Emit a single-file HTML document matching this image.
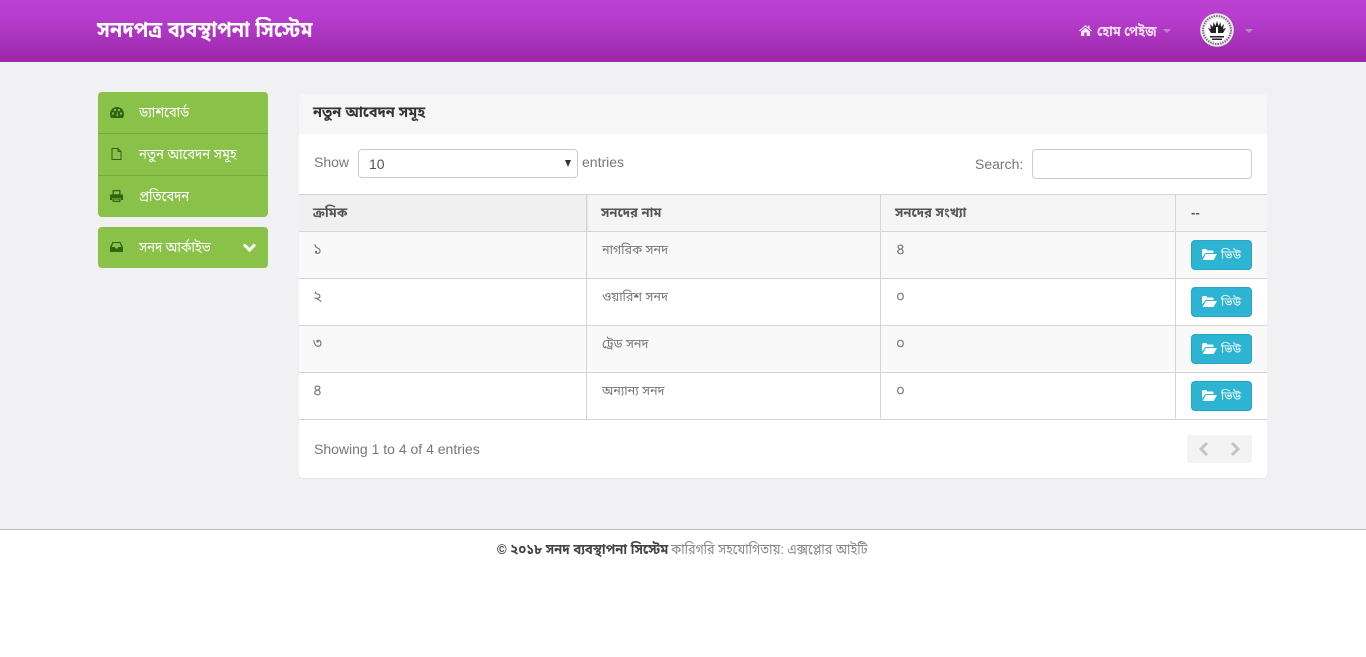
<!DOCTYPE html>
<html lang="bn"><head><meta charset="utf-8"><title>সনদপত্র ব্যবস্থাপনা সিস্টেম</title>
<style>
*{box-sizing:border-box}
html,body{margin:0;padding:0;width:1366px;height:657px;overflow:hidden;background:#fff;font-family:"Liberation Sans","Noto Sans Bengali","Lohit Bengali","FreeSans",sans-serif;color:#777;font-size:14px}
.a{position:absolute;white-space:nowrap}
.sx{transform-origin:0 50%}
#hdr{left:0;top:0;width:1366px;height:62px;background:linear-gradient(#bb40d2,#b63dcd 30%,#9c27a9)}
#bg{left:0;top:62px;width:1366px;height:468px;background:#f1f0f2;border-bottom:1px solid #bbb}
.side{left:98px;width:170px;background:#8ac249;border-radius:4px}
.sr{left:98px;width:170px;height:1px;background:#76a93f}
.st{left:139px;color:#fff;font-size:14px;line-height:20px;transform-origin:0 50%;transform:scaleX(.93)}
#panel{left:299px;top:94px;width:968px;height:384px;background:#fff;border-radius:4px;box-shadow:0 1px 1px rgba(0,0,0,.04)}
#ph{left:299px;top:94px;width:968px;height:40px;background:#f6f6f6;border-radius:4px 4px 0 0}
.h{background:#d5d5d5}
.td{color:#777;font-size:13px;line-height:18px;transform-origin:0 50%;transform:scaleX(.97)}
.dg{color:#777;font-size:15px;line-height:18px}
.th{color:#555;font-size:13px;font-weight:bold;line-height:18px}
.btn{left:1191px;width:61px;height:30px;background:#2cb4d2;border:1px solid #28a5c2;border-radius:4px;color:#fff;font-size:12px;line-height:28px;padding-left:29px}
</style></head><body>
<div class="a" id="bg"></div>
<div class="a" id="hdr"></div>
<div class="a sx" style="left:97px;top:15px;color:#fff;font-size:22px;font-weight:bold;line-height:30px;transform:scaleX(.907)">সনদপত্র ব্যবস্থাপনা সিস্টেম</div>

<svg class="a" style="left:1079px;top:25px" width="13" height="11" viewBox="0 0 13 11"><path d="M6.500 0 0 5.600l.8.8L6.500 1.600l5.700 4.800.8-.8-2.500-2.100V.6H9v1.500zM2 6.500V11h3.300V7.500h2.400V11H11V6.500L6.500 2.700z" fill="#f5e6f8"/></svg>
<div class="a sx" style="left:1097px;top:21px;color:#f3dff6;font-size:14px;font-weight:bold;line-height:20px;transform:scaleX(.91)">হোম পেইজ</div>
<div class="a" style="left:1163px;top:29px;border:4px solid transparent;border-top-color:#b98ac2;border-bottom:0"></div>
<svg class="a" style="left:1200px;top:13px" width="34" height="34" viewBox="0 0 34 34"><circle cx="17" cy="17" r="16.800" fill="#eeeaee"/><circle cx="17" cy="17" r="14" fill="none" stroke="#777" stroke-width="2" stroke-dasharray="1.500 1"/><circle cx="17" cy="17" r="11.500" fill="#fff"/><path d="M17 8l1.500 5 2-4 .5 5 3-3-1 5 3-1-3 5H11l-3-5 3 1-1-5 3 3 .5-5 2 4z" fill="#222"/><path d="M10 23h14v1.500H10zM12 25.500h10V27H12z" fill="#222"/><path d="M16 14h2v7h-2z" fill="#fff"/></svg>
<div class="a" style="left:1245px;top:29px;border:4px solid transparent;border-top-color:#b98ac2;border-bottom:0"></div>

<div class="a side" style="top:92px;height:125px"></div>
<div class="a sr" style="top:133px"></div>
<div class="a sr" style="top:175px"></div>
<div class="a side" style="top:227px;height:41px"></div>

<svg class="a" style="left:110px;top:107px" width="14" height="11" viewBox="0 0 14 11"><path d="M7 0a7 7 0 0 0-7 7c0 1.500.4 3 1.200 4h11.600c.8-1 1.200-2.500 1.200-4a7 7 0 0 0-7-7z" fill="#2f6414"/><circle cx="3" cy="6.500" r="1.100" fill="#8ac249"/><circle cx="5" cy="3" r="1.100" fill="#8ac249"/><circle cx="9" cy="3" r="1.100" fill="#8ac249"/><circle cx="11" cy="6.500" r="1.100" fill="#8ac249"/><path d="M6.300 9l1-5 .6 5z" fill="#8ac249"/></svg>
<div class="a st" style="top:102px">ড্যাশবোর্ড</div>
<svg class="a" style="left:111px;top:148px" width="11" height="12" viewBox="0 0 11 12"><path d="M1 .5h6l3 3v8H1zM7 .5v3h3" fill="none" stroke="#2f6414"/></svg>
<div class="a st" style="top:144px">নতুন আবেদন সমূহ</div>
<svg class="a" style="left:110px;top:190px" width="13" height="12" viewBox="0 0 13 12"><path d="M2.500 0h8v4.500h-8zM0 4.500h13V10h-2V8H2v2H0zM2.500 8.500h8V12h-8z" fill="#2f6414"/><path d="M3.800 1.200h5.400v3H3.800zM3.800 9.500h5.400v1.300H3.800z" fill="#8ac249"/></svg>
<div class="a st" style="top:186px">প্রতিবেদন</div>
<svg class="a" style="left:110px;top:242px" width="13" height="10" viewBox="0 0 13 10"><path d="M2.500 0h8L13 5v5H0V5zM3.300 1 1.700 5h3l.8 1.500h2L8.300 5h3L9.700 1z" fill="#2f6414"/></svg>
<div class="a st" style="top:237px">সনদ আর্কাইভ</div>
<svg class="a" style="left:242px;top:242px" width="15" height="11" viewBox="0 0 15 11"><path d="M2 2.500l5.500 5.500L13 2.500" fill="none" stroke="#fff" stroke-width="3"/></svg>

<div class="a" id="panel"></div>
<div class="a" id="ph"></div>
<div class="a sx" style="left:313px;top:103px;color:#333;font-size:15px;font-weight:bold;line-height:20px;transform:scaleX(.97)">নতুন আবেদন সমূহ</div>

<div class="a" style="left:314px;top:153px;line-height:18px">Show</div>
<div class="a" style="left:358px;top:149px;width:220px;height:29px;border:1px solid #ccc;border-radius:4px;background:#fff;color:#555;line-height:28px;padding-left:10px">10</div>
<div class="a" style="left:565px;top:160px;border:3.500px solid transparent;border-top:7px solid #333;border-bottom:0"></div>
<div class="a" style="left:582px;top:153px;line-height:18px">entries</div>
<div class="a" style="left:975px;top:155px;line-height:18px">Search:</div>
<div class="a" style="left:1032px;top:149px;width:220px;height:30px;border:1px solid #ccc;border-radius:4px;background:#fff"></div>

<div class="a" style="left:299px;top:194px;width:968px;height:38px;background:#f5f5f5"></div>
<div class="a" style="left:299px;top:194px;width:288px;height:38px;background:#f0f0f0;box-shadow:1px 0 1px rgba(0,0,0,.08)"></div>
<div class="a" style="left:299px;top:232px;width:968px;height:47px;background:#f9f9f9"></div>
<div class="a" style="left:299px;top:326px;width:968px;height:47px;background:#f9f9f9"></div>

<div class="a h" style="left:299px;top:194px;width:968px;height:1px"></div>
<div class="a h" style="left:299px;top:231px;width:968px;height:1px"></div>
<div class="a h" style="left:299px;top:278px;width:968px;height:1px"></div>
<div class="a h" style="left:299px;top:325px;width:968px;height:1px"></div>
<div class="a h" style="left:299px;top:372px;width:968px;height:1px"></div>
<div class="a h" style="left:299px;top:419px;width:968px;height:1px"></div>
<div class="a h" style="left:586px;top:194px;width:1px;height:226px"></div>
<div class="a h" style="left:880px;top:194px;width:1px;height:226px"></div>
<div class="a h" style="left:1175px;top:194px;width:1px;height:226px"></div>

<div class="a th" style="left:313px;top:204px">ক্রমিক</div>
<div class="a th" style="left:601px;top:204px">সনদের নাম</div>
<div class="a th" style="left:895px;top:204px">সনদের সংখ্যা</div>
<div class="a th" style="left:1191px;top:204px">--</div>

<div class="a dg" style="left:313px;top:241px">১</div><div class="a td" style="left:602px;top:241px">নাগরিক সনদ</div><div class="a dg" style="left:896px;top:241px">৪</div>
<div class="a dg" style="left:313px;top:288px">২</div><div class="a td" style="left:602px;top:288px">ওয়ারিশ সনদ</div><div class="a dg" style="left:896px;top:288px">০</div>
<div class="a dg" style="left:313px;top:335px">৩</div><div class="a td" style="left:602px;top:335px">ট্রেড সনদ</div><div class="a dg" style="left:896px;top:335px">০</div>
<div class="a dg" style="left:313px;top:382px">৪</div><div class="a td" style="left:602px;top:382px">অন্যান্য সনদ</div><div class="a dg" style="left:896px;top:382px">০</div>

<div class="a btn" style="top:240px">ভিউ</div>
<div class="a btn" style="top:287px">ভিউ</div>
<div class="a btn" style="top:334px">ভিউ</div>
<div class="a btn" style="top:381px">ভিউ</div>
<svg class="a" style="left:1202px;top:249px" width="15" height="11" viewBox="0 0 15 11"><path d="M0 1.500C0 .6.500 0 1.300 0h3l1 1.500h5c.8 0 1.200.5 1.200 1.300V4H3.500L0 8.500zM3.900 5H15l-3.400 6H.6z" fill="#fff"/></svg>
<svg class="a" style="left:1202px;top:296px" width="15" height="11" viewBox="0 0 15 11"><path d="M0 1.500C0 .6.500 0 1.300 0h3l1 1.500h5c.8 0 1.200.5 1.200 1.300V4H3.500L0 8.500zM3.900 5H15l-3.400 6H.6z" fill="#fff"/></svg>
<svg class="a" style="left:1202px;top:343px" width="15" height="11" viewBox="0 0 15 11"><path d="M0 1.500C0 .6.500 0 1.300 0h3l1 1.500h5c.8 0 1.200.5 1.200 1.300V4H3.500L0 8.500zM3.900 5H15l-3.400 6H.6z" fill="#fff"/></svg>
<svg class="a" style="left:1202px;top:390px" width="15" height="11" viewBox="0 0 15 11"><path d="M0 1.500C0 .6.500 0 1.300 0h3l1 1.500h5c.8 0 1.200.5 1.200 1.300V4H3.500L0 8.500zM3.900 5H15l-3.400 6H.6z" fill="#fff"/></svg>

<div class="a" style="left:314px;top:440px;line-height:18px">Showing 1 to 4 of 4 entries</div>
<div class="a" style="left:1187px;top:435px;width:65px;height:28px;background:#f3f3f3;border-radius:3px"></div>
<svg class="a" style="left:1197px;top:441px" width="48" height="16" viewBox="0 0 48 16"><path d="M10 2 4 8l6 6M35 2l6 6-6 6" fill="none" stroke="#c4c4c4" stroke-width="3"/></svg>

<div class="a sx" style="left:497px;top:540px;font-size:14px;line-height:18px;font-weight:bold;color:#444;transform:scaleX(.934)">© ২০১৮ সনদ ব্যবস্থাপনা সিস্টেম</div>
<div class="a sx" style="left:671px;top:540px;font-size:14px;line-height:18px;color:#888;transform:scaleX(.904)">কারিগরি সহযোগিতায়: এক্সপ্লোর আইটি</div>
</body></html>
